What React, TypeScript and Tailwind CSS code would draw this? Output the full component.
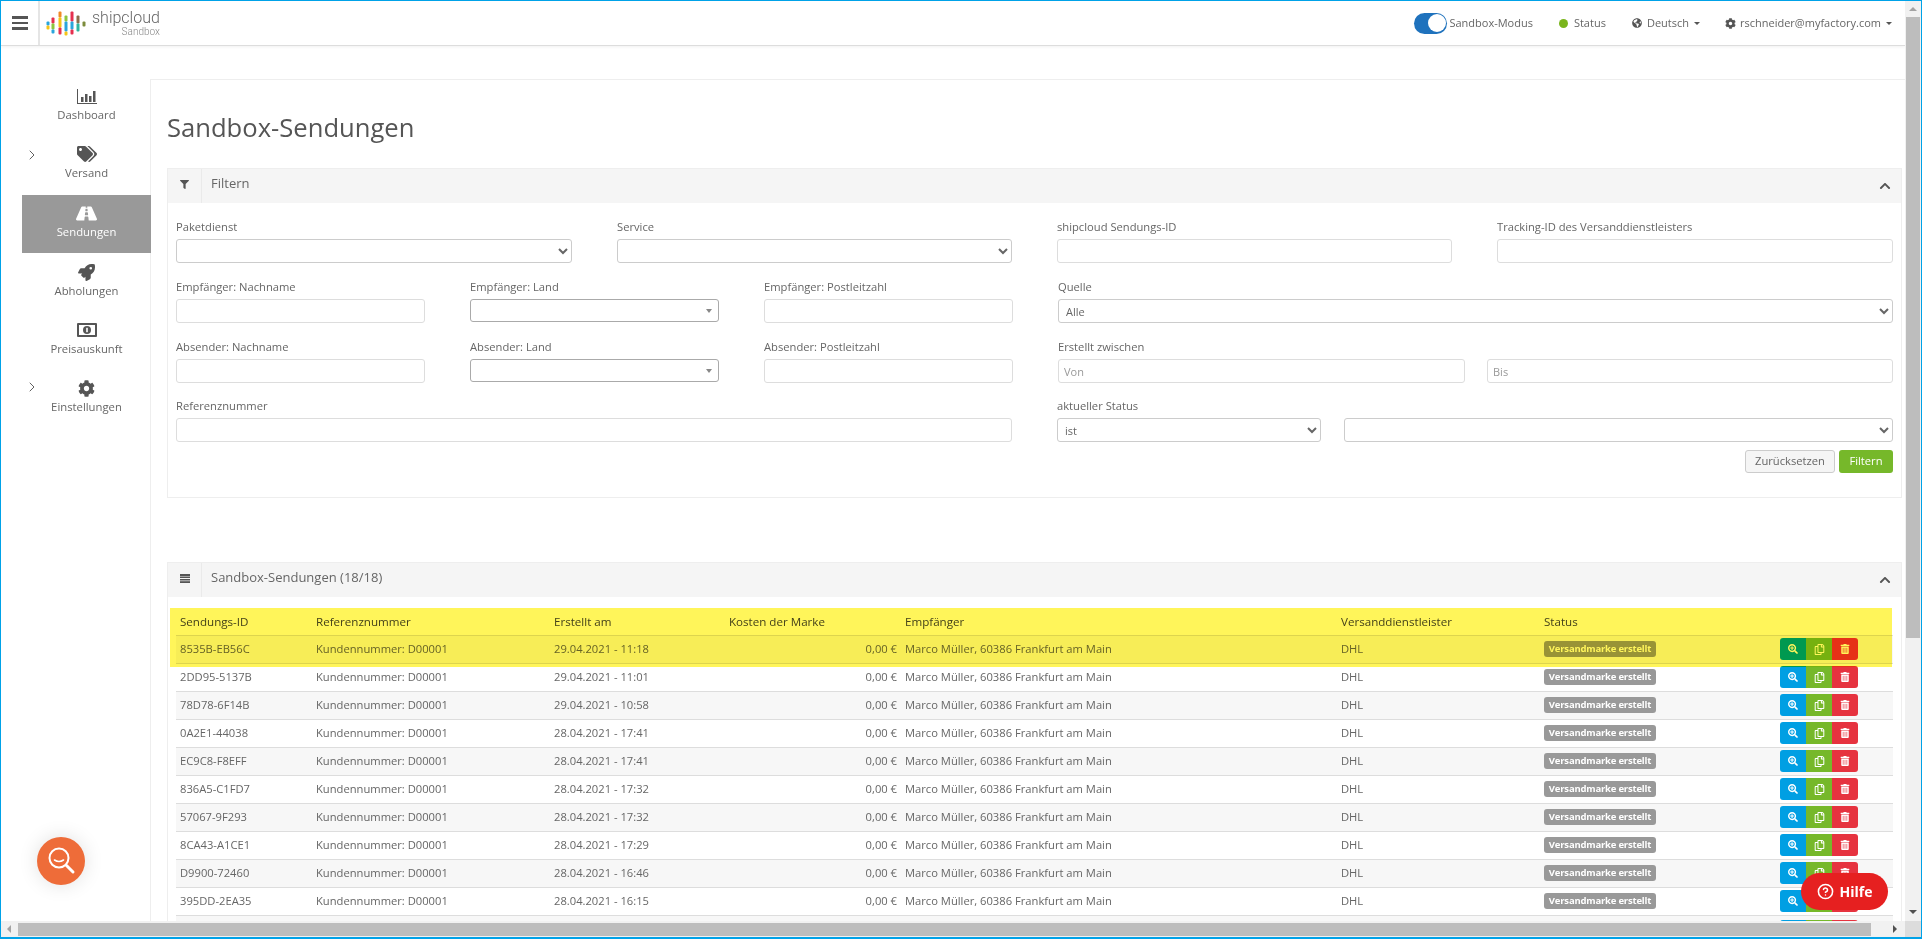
import { ChevronRight, CircleHelp } from 'lucide-react';
import {
  FaChevronUp,
  FaCog,
  FaFilter,
  FaGlobeAmericas,
  FaRegCopy,
  FaRoad,
  FaRocket,
  FaSearchPlus,
  FaTags,
  FaTrashAlt,
} from 'react-icons/fa';
import type { ReactNode } from 'react';

const shipments = [
  ['8535B-EB56C', '29.04.2021 - 11:18'],
  ['2DD95-5137B', '29.04.2021 - 11:01'],
  ['78D78-6F14B', '29.04.2021 - 10:58'],
  ['0A2E1-44038', '28.04.2021 - 17:41'],
  ['EC9C8-F8EFF', '28.04.2021 - 17:41'],
  ['836A5-C1FD7', '28.04.2021 - 17:32'],
  ['57067-9F293', '28.04.2021 - 17:32'],
  ['8CA43-A1CE1', '28.04.2021 - 17:29'],
  ['D9900-72460', '28.04.2021 - 16:46'],
  ['395DD-2EA35', '28.04.2021 - 16:15'],
];

function Logo() {
  const bars = [
    { x: 2, parts: [[10, 14, '#2aa5dc'], [14, 18, '#f5c518']] },
    { x: 7, parts: [[6, 12, '#e5304f'], [12, 18, '#8cc63f'], [18, 22, '#2aa5dc']] },
    { x: 14, parts: [[0, 6, '#f08a24'], [6, 16, '#f5c518'], [16, 23, '#e5304f']] },
    { x: 20, parts: [[4, 10, '#8cc63f'], [10, 20, '#2aa5dc'], [20, 24, '#f5c518']] },
    { x: 26, parts: [[0, 10, '#e5304f'], [10, 18, '#2aa5dc'], [18, 23, '#e5304f']] },
    { x: 32, parts: [[4, 12, '#8a6d4b'], [12, 20, '#2fb5a0']] },
    { x: 38, parts: [[10, 15, '#7d8c3c']] },
  ] as const;
  return (
    <svg width="40" height="25" viewBox="0 0 40 24" className="shrink-0">
      {bars.map((bar) =>
        bar.parts.map(([from, to, color]) => (
          <rect key={`${bar.x}-${from}`} x={bar.x - 1.5} y={from} width="3" height={to - from} rx="1" fill={color} />
        )),
      )}
    </svg>
  );
}

function ChartIcon() {
  return (
    <svg width="20" height="15" viewBox="0 0 20 15" fill="#555">
      <rect x="0" y="0" width="1" height="15" />
      <rect x="0" y="14" width="20" height="1" />
      <rect x="4" y="8" width="2.5" height="5" />
      <rect x="8" y="5" width="2.5" height="8" />
      <rect x="12" y="7" width="2.5" height="6" />
      <rect x="16" y="2" width="2.5" height="11" />
    </svg>
  );
}

function MoneyIcon() {
  return (
    <svg width="20" height="14" viewBox="0 0 20 14">
      <rect width="20" height="14" rx="1" fill="#555" />
      <rect x="2" y="2" width="16" height="10" fill="#fff" />
      <path d="M0 1h2v2H0zM18 1h2v2h-2zM0 11h2v2H0zM18 11h2v2h-2z" fill="#555" />
      <circle cx="10" cy="7" r="4" fill="#555" />
      <rect x="9.2" y="4.8" width="1.6" height="4.4" fill="#fff" />
    </svg>
  );
}

function ListIcon() {
  return (
    <svg width="10" height="9" viewBox="0 0 10 9" fill="#555">
      <rect width="10" height="2" />
      <rect y="2.5" width="10" height="1.5" />
      <rect y="5" width="10" height="1.5" />
      <rect y="7.2" width="10" height="1.8" />
    </svg>
  );
}

function Caret() {
  return <span className="ml-[5px] inline-block h-0 w-0 border-x-[3px] border-t-[3px] border-x-transparent border-t-[#555]" />;
}

function NavItem({ icon, label, expandable, active, className }: { icon: ReactNode; label: string; expandable?: boolean; active?: boolean; className: string }) {
  return (
    <div className={`relative flex h-[58px] flex-col items-center ${className} ${active ? 'bg-[#999] text-white' : 'text-[#666]'}`}>
      {expandable && <ChevronRight size={16} strokeWidth={1.4} className="absolute left-[2px] top-[10px] text-[#555]" />}
      <div className="flex h-[18px] items-center">{icon}</div>
      <div className={`mt-[1px] text-[11.3px] leading-[18px] ${active ? 'font-medium' : ''}`}>{label}</div>
    </div>
  );
}

function Sidebar() {
  return (
    <aside className="relative z-10 -mr-px w-[150px] shrink-0 pl-[21px] pt-[33px]">
      <NavItem className="pt-[8px]" icon={<ChartIcon />} label="Dashboard" />
      <NavItem className="pt-[8px]" icon={<FaTags size={20} className="text-[#555]" />} label="Versand" expandable />
      <NavItem className="pt-[9px]" icon={<FaRoad size={21} className="text-white" />} label="Sendungen" active />
      <NavItem className="pt-[10px]" icon={<FaRocket size={17} className="text-[#555]" />} label="Abholungen" />
      <NavItem className="pt-[10px]" icon={<MoneyIcon />} label="Preisauskunft" />
      <NavItem className="pt-[10px]" icon={<FaCog size={17} className="text-[#555]" />} label="Einstellungen" expandable />
    </aside>
  );
}

function TopBar() {
  return (
    <header className="flex h-[45px] shrink-0 items-center border-b border-[#ddd] shadow-[0_1px_3px_rgba(0,0,0,0.06)]">
      <div className="flex h-full w-[39px] items-center justify-center border-r-2 border-[#e5e5e5] pl-[1px]">
        <div className="flex w-[16px] flex-col gap-[3px]">
          <span className="h-[2.5px] bg-[#555]" />
          <span className="h-[2.5px] bg-[#555]" />
          <span className="h-[2.5px] bg-[#555]" />
        </div>
      </div>
      <div className="ml-[6px] flex items-center">
        <Logo />
        <div className="ml-[6px] flex flex-col items-end text-[#666]">
          <span className="font-['Roboto',sans-serif] text-[16px] font-light leading-[18px]">shipcloud</span>
          <span className="font-['Roboto',sans-serif] text-[10px] font-light leading-[10px] text-[#888]">Sandbox</span>
        </div>
      </div>
      <div className="ml-auto flex items-center pr-[13px] text-[11px] text-[#666]">
        <div className="flex h-[21px] w-[33px] items-center justify-end rounded-full bg-[#1f72bd] pr-[1px]">
          <span className="h-[18px] w-[18px] rounded-full bg-white" />
        </div>
        <span className="ml-[2px]">Sandbox-Modus</span>
        <span className="ml-[26px] h-[9px] w-[9px] rounded-full bg-[#7ab51d]" />
        <span className="ml-[6px]">Status</span>
        <FaGlobeAmericas size={10} className="ml-[26px] text-[#555]" />
        <span className="ml-[5px]">Deutsch</span>
        <Caret />
        <FaCog size={11} className="ml-[25px] text-[#555]" />
        <span className="ml-[4px]">rschneider@myfactory.com</span>
        <Caret />
      </div>
    </header>
  );
}

function Field({ label, className, children }: { label: string; className?: string; children: ReactNode }) {
  return (
    <div className={className}>
      <label className="mb-[3px] block h-[18px] text-[11.2px] leading-[18px] text-[#666]">{label}</label>
      {children}
    </div>
  );
}

const inputClass = 'block h-[24px] w-full rounded-[3px] border border-[#ddd] bg-white px-[5px] text-[11px] text-[#666] placeholder:text-[#999]';
const selectClass = 'block h-[24px] w-full rounded-[3px] border border-[#ccc] bg-white px-[3px] text-[11px] text-[#666]';

function TextField({ label, placeholder, className }: { label: string; placeholder?: string; className?: string }) {
  return (
    <Field label={label} className={className}>
      <input className={inputClass} placeholder={placeholder} />
    </Field>
  );
}

function SelectField({ label, value, className }: { label: string; value?: string; className?: string }) {
  return (
    <Field label={label} className={className}>
      <select className={selectClass}>
        <option>{value}</option>
      </select>
    </Field>
  );
}

function CountrySelect({ label }: { label: string }) {
  return (
    <Field label={label} className="w-[249px]">
      <div className="flex h-[23px] items-center justify-end rounded-[3px] border border-[#aaa] bg-white pr-[6px]">
        <span className="h-0 w-0 border-x-[3px] border-t-[4px] border-x-transparent border-t-[#888]" />
      </div>
    </Field>
  );
}

function PanelHeader({ icon, title }: { icon: ReactNode; title: string }) {
  return (
    <div className="flex h-[34px] items-center bg-[#f5f5f5] pr-[10px]">
      <div className="flex h-full w-[34px] items-center justify-center border-r border-[#eaeaea] pb-[4px]">{icon}</div>
      <span className="-mt-[5px] ml-[9px] text-[13px] text-[#666]">{title}</span>
      <FaChevronUp size={12} className="ml-auto text-[#555]" />
    </div>
  );
}

function FilterPanel() {
  return (
    <section className="border border-[#eee]">
      <PanelHeader icon={<FaFilter size={9} className="text-[#555]" />} title="Filtern" />
      <div className="flex flex-col gap-[15px] pb-[24px] pl-[8px] pr-[8px] pt-[15px]">
        <div className="flex gap-[45px]">
          <SelectField label="Paketdienst" className="w-[396px]" />
          <SelectField label="Service" className="w-[395px]" />
          <TextField label="shipcloud Sendungs-ID" className="w-[395px]" />
          <TextField label="Tracking-ID des Versanddienstleisters" className="w-[396px]" />
        </div>
        <div className="flex gap-[45px]">
          <TextField label="Empfänger: Nachname" className="w-[249px]" />
          <CountrySelect label="Empfänger: Land" />
          <TextField label="Empfänger: Postleitzahl" className="w-[249px]" />
          <SelectField label="Quelle" value="Alle" className="flex-1" />
        </div>
        <div className="flex gap-[45px]">
          <TextField label="Absender: Nachname" className="w-[249px]" />
          <CountrySelect label="Absender: Land" />
          <TextField label="Absender: Postleitzahl" className="w-[249px]" />
          <div className="flex flex-1 items-end gap-[22px]">
            <TextField label="Erstellt zwischen" placeholder="Von" className="w-[407px]" />
            <div className="flex-1">
              <input className={inputClass} placeholder="Bis" />
            </div>
          </div>
        </div>
        <div className="-mt-px flex gap-[45px]">
          <TextField label="Referenznummer" className="w-[836px]" />
          <div className="flex flex-1 items-end gap-[23px]">
            <SelectField label="aktueller Status" value="ist" className="w-[264px]" />
            <div className="flex-1">
              <select className={selectClass}>
                <option />
              </select>
            </div>
          </div>
        </div>
        <div className="-mt-[7px] flex justify-end gap-[4px]">
          <button className="h-[23px] w-[90px] rounded-[3px] border border-[#ccc] bg-[#f5f5f5] text-[11.2px] text-[#666]">Zurücksetzen</button>
          <button className="h-[23px] w-[54px] rounded-[3px] bg-[#76b82a] text-[11.2px] text-white">Filtern</button>
        </div>
      </div>
    </section>
  );
}

function Actions() {
  return (
    <div className="flex h-[22px] w-[78px] overflow-hidden rounded-[3px] text-white">
      <span className="flex w-[26px] items-center justify-center bg-[#009fe3]">
        <FaSearchPlus size={10} />
      </span>
      <span className="flex w-[26px] items-center justify-center bg-[#76b82a]">
        <FaRegCopy size={11} />
      </span>
      <span className="flex w-[26px] items-center justify-center bg-[#e6333f]">
        <FaTrashAlt size={10} />
      </span>
    </div>
  );
}

function ShipmentsTable() {
  const headers = ['Sendungs-ID', 'Referenznummer', 'Erstellt am', 'Kosten der Marke', 'Empfänger', 'Versanddienstleister', 'Status', ''];
  return (
    <div className="relative ml-[8px] mr-[8px] mt-[11px]">
      <table className="w-full table-fixed border-collapse text-[11.2px] text-[#666]">
        <colgroup>
          <col className="w-[136px]" />
          <col className="w-[238px]" />
          <col className="w-[175px]" />
          <col className="w-[176px]" />
          <col className="w-[436px]" />
          <col className="w-[203px]" />
          <col className="w-[236px]" />
          <col />
        </colgroup>
        <thead>
          <tr className="h-[27px] border-b border-[#ddd]">
            {headers.map((h) => (
              <th key={h} className="px-[4px] text-left text-[11.6px] font-medium text-[#444]">
                {h}
              </th>
            ))}
          </tr>
        </thead>
        <tbody>
          {shipments.map(([id, created], i) => (
            <tr key={id} className={`h-[28px] border-b border-[#ddd] ${i % 2 === 0 ? 'bg-[#f7f7f7]' : 'bg-white'}`}>
              <td className="px-[4px]">{id}</td>
              <td className="px-[4px]">Kundennummer: D00001</td>
              <td className="px-[4px]">{created}</td>
              <td className="px-[4px] text-right">0,00 €</td>
              <td className="px-[4px]">Marco Müller, 60386 Frankfurt am Main</td>
              <td className="px-[4px]">DHL</td>
              <td className="px-[4px]">
                <span className="flex h-[16px] w-[112px] items-center justify-center whitespace-nowrap rounded-[3px] bg-[#999] text-[9.5px] font-bold tracking-[-0.2px] text-white">
                  Versandmarke erstellt
                </span>
              </td>
              <td className="px-[4px]">
                <Actions />
              </td>
            </tr>
          ))}
          <tr className="h-[28px] bg-[#f7f7f7] align-top">
            <td colSpan={7} />
            <td className="px-[4px] pt-[4px]">
              <Actions />
            </td>
          </tr>
        </tbody>
      </table>
      {/* yellow marker drawn over the newest row */}
      <div className="pointer-events-none absolute -left-[6px] top-0 h-[59px] w-[1722px] bg-[#fff55a] mix-blend-multiply" />
    </div>
  );
}

function Scrollbars() {
  return (
    <div className="flex w-[16px] shrink-0 flex-col items-center bg-[#f1f1f1]">
      <span className="mt-[6px] h-0 w-0 border-x-[4px] border-b-[4px] border-x-transparent border-b-[#a3a3a3]" />
      <div className="mt-[6px] h-[621px] w-[14px] bg-[#bdbdbd]" />
      <span className="mb-[7px] mt-auto h-0 w-0 border-x-[4px] border-t-[4px] border-x-transparent border-t-[#505050]" />
    </div>
  );
}

export default function App() {
  return (
    <div className="relative flex h-[939px] w-[1922px] flex-col overflow-hidden border border-b-2 border-[#00a2e8] bg-white font-['Open_Sans',sans-serif]">
      <div className="flex min-h-0 flex-1">
        <div className="flex min-w-0 flex-1 flex-col">
          <TopBar />
          <div className="flex min-h-0 flex-1 overflow-hidden pt-[33px]">
            <div className="-mt-[33px] flex">
              <Sidebar />
            </div>
            <main className="min-w-0 flex-1 border-l border-t border-[#eee] pl-[16px] pr-[3px] pt-[32px]">
              <h1 className="mb-[24px] text-[25.6px] leading-[32px] text-[#555]">Sandbox-Sendungen</h1>
              <FilterPanel />
              <section className="mt-[64px] border border-[#eee]">
                <PanelHeader icon={<ListIcon />} title="Sandbox-Sendungen (18/18)" />
                <ShipmentsTable />
              </section>
            </main>
          </div>
        </div>
        <Scrollbars />
      </div>
      <div className="flex h-[16px] shrink-0 items-center bg-[#f1f1f1]">
        <span className="ml-[6px] h-0 w-0 border-y-[4px] border-r-[4px] border-y-transparent border-r-[#a3a3a3]" />
        <div className="ml-[7px] h-[13px] w-[1853px] bg-[#bdbdbd]" />
        <span className="ml-[22px] h-0 w-0 border-y-[4px] border-l-[4px] border-y-transparent border-l-[#505050]" />
        <div className="ml-auto h-full w-[16px] bg-[#dcdcdc]" />
      </div>

      <div className="absolute left-[36px] top-[836px] flex h-[48px] w-[48px] items-center justify-center rounded-full bg-[#ee6c39] shadow-[0_0_20px_rgba(0,0,0,0.12)]">
        <svg width="30" height="30" viewBox="0 0 30 30" fill="none" stroke="#fff" strokeLinecap="round">
          <circle cx="13" cy="12" r="9.5" strokeWidth="2" />
          <path d="M8.5 14 q4.5 3 9 0" strokeWidth="1.6" />
          <path d="M20.5 19.5 L27 26" strokeWidth="3" />
        </svg>
      </div>

      <div className="absolute left-[1800px] top-[872px] flex h-[37px] w-[87px] items-center justify-center gap-[6px] rounded-full bg-[#e62020] text-[14px] font-bold text-white">
        <CircleHelp size={17} strokeWidth={2.2} />
        Hilfe
      </div>
    </div>
  );
}
